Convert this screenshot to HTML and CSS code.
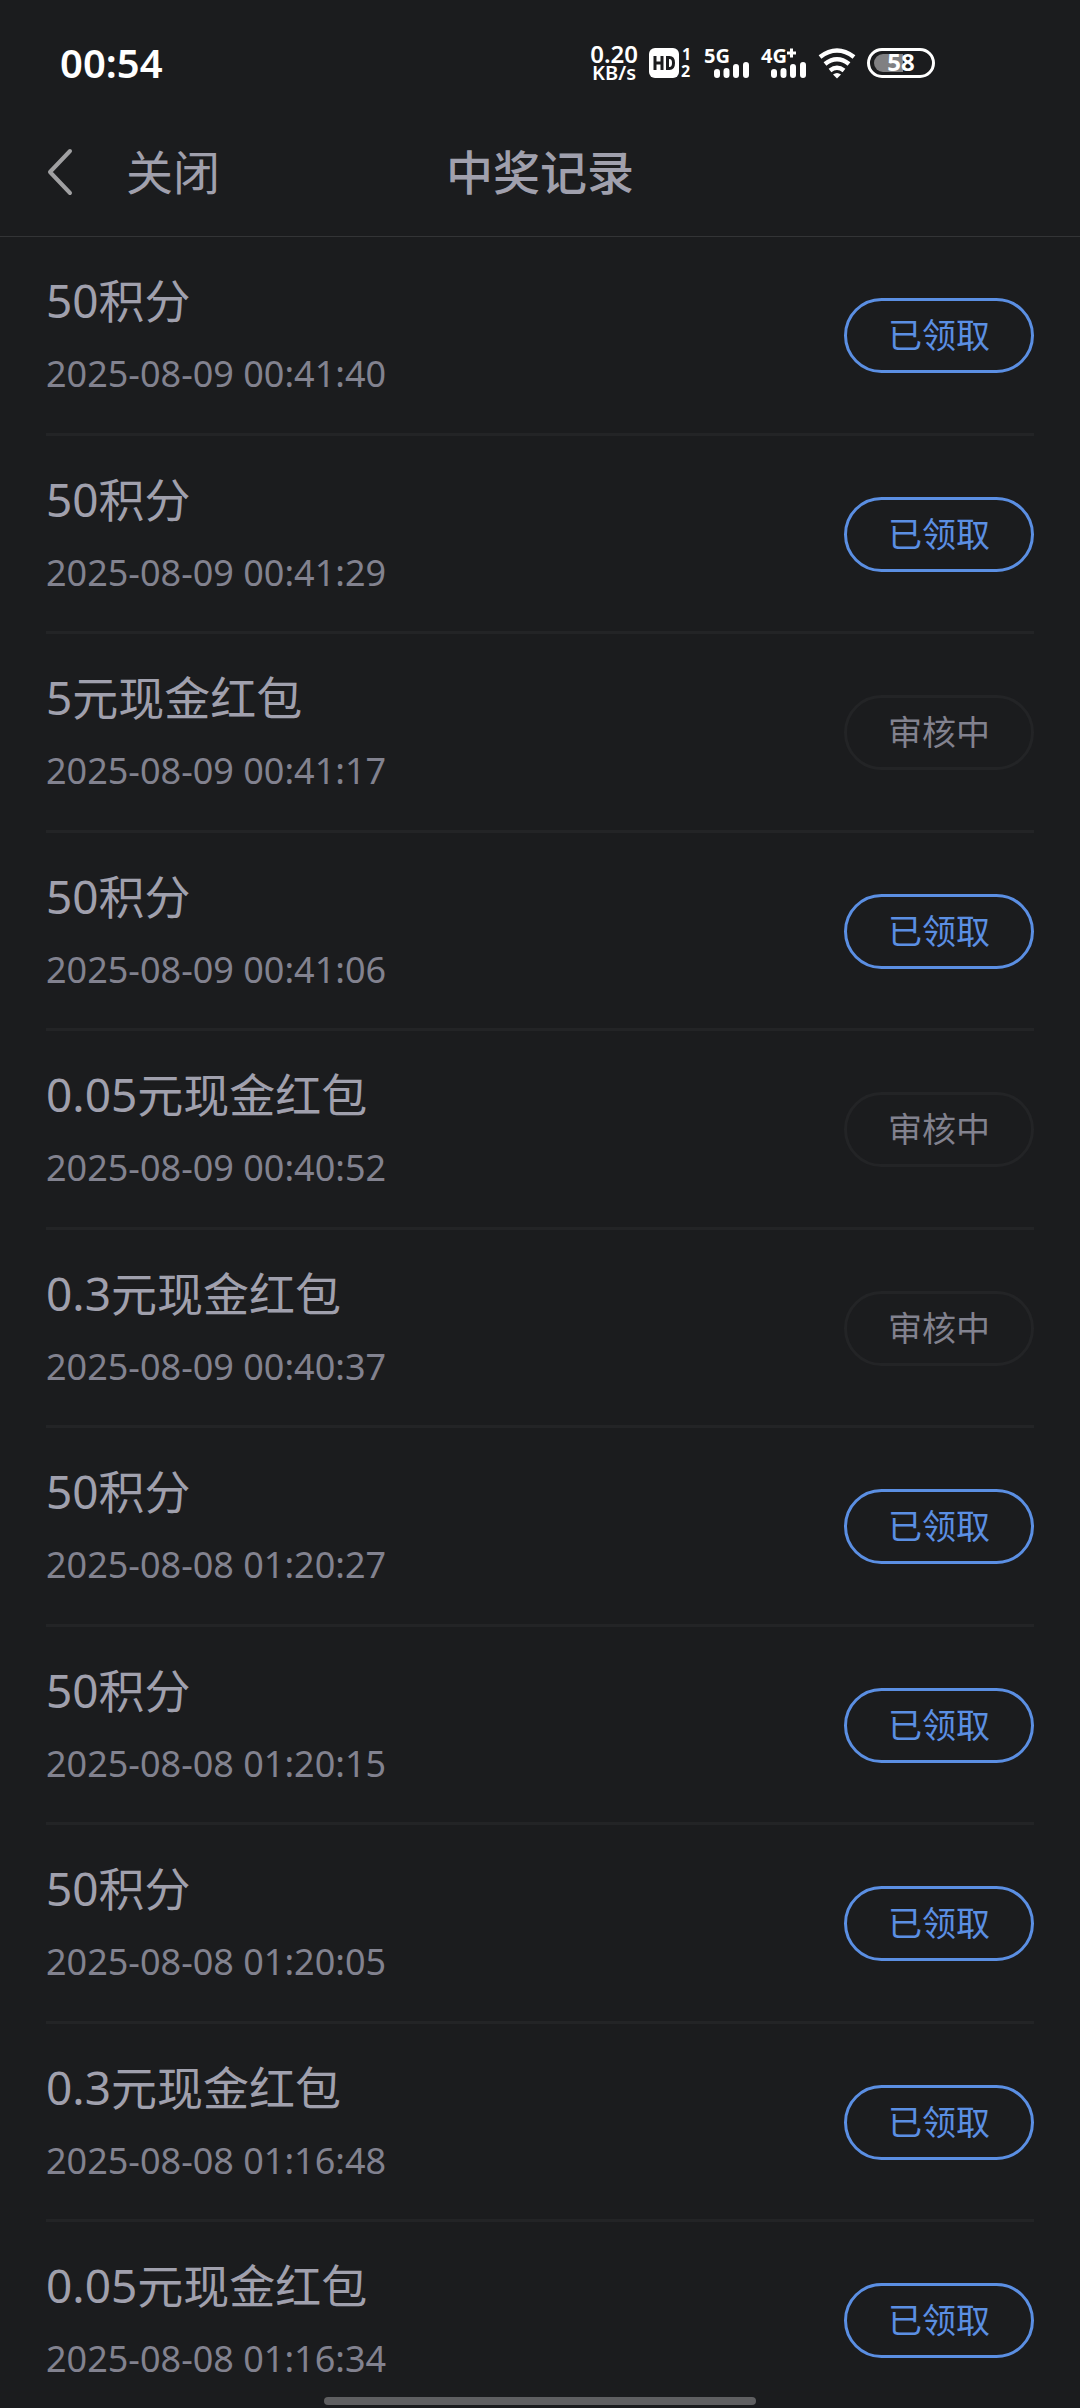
FILE: index.html
```html
<!DOCTYPE html>
<html lang="zh-CN">
<head>
    <meta charset="UTF-8">
    <meta name="viewport" content="width=device-width, initial-scale=1.0">
    <title>中奖记录</title>
    <link rel="stylesheet" href="styles.css">
</head>
<body>
<div class="screen">
    <div class="status-bar">
        <span class="clock">00:54</span>
        <div class="status-icons">
            <div class="speed"><span class="speed-value">0.20</span><span class="speed-unit">KB/s</span></div>
            <svg class="icon-hd" width="44" height="32" viewBox="0 0 44 32">
                <rect x="0" y="1" width="30" height="30" rx="6" fill="#fff"/>
                <path d="M6 9v14M13 9v14M6 16h7M18.500 10.500h2q4 0 4 5.500t-4 5.500h-2z" fill="none" stroke="#1b1c1e" stroke-width="3"/>
                <text x="33" y="13" class="tiny">1</text>
                <text x="32" y="30" class="tiny">2</text>
            </svg>
            <svg class="icon-signal" width="46" height="32" viewBox="0 0 46 32">
                <text x="0" y="16" class="net">5G</text>
                <path d="M13 25v3M22.500 24v4M32 20v8M42 18v10" fill="none" stroke="#fff" stroke-width="6" stroke-linecap="round"/>
            </svg>
            <svg class="icon-signal" width="46" height="32" viewBox="0 0 46 32">
                <text x="0" y="16" class="net">4G</text>
                <path d="M26 6h9M30.500 1.500v9" stroke="#fff" stroke-width="3"/>
                <path d="M13 25v3M22.500 24v4M32 20v8M42 18v10" fill="none" stroke="#fff" stroke-width="6" stroke-linecap="round"/>
            </svg>
            <svg class="icon-wifi" width="38" height="32" viewBox="0 0 38 32">
                <path d="M2 10Q19-3 36 10M7 17Q19 7.500 31 17M12 23.500Q19 18 26 23.500" fill="none" stroke="#fff" stroke-width="4.500"/>
                <path d="M15 27.500Q19 24.500 23 27.500L19 31.500z" fill="#fff"/>
            </svg>
            <svg class="icon-battery" width="68" height="32" viewBox="0 0 68 32">
                <rect x="1.500" y="2.500" width="65" height="27" rx="13.500" fill="none" stroke="#fff" stroke-width="3"/>
                <path d="M16 7h20v18H16a9 9 0 0 1 0-18z" fill="#808082"/>
                <text x="34" y="24" text-anchor="middle" class="level">58</text>
            </svg>
        </div>
    </div>

    <header class="header">
        <div class="header-left">
            <button class="back" type="button" aria-label="返回">
                <svg width="28" height="48" viewBox="0 0 28 48">
                    <path d="M24 3L4 24l20 21" fill="none" stroke="#a0a0a2" stroke-width="4" stroke-linecap="round" stroke-linejoin="round"/>
                </svg>
            </button>
            <button class="close" type="button">关闭</button>
        </div>
        <h1>中奖记录</h1>
    </header>

    <ul class="records">
        <li class="record">
            <div class="info"><p class="prize">50积分</p><time class="date">2025-08-09 00:41:40</time></div>
            <button class="state" type="button">已领取</button>
        </li>
        <li class="record">
            <div class="info"><p class="prize">50积分</p><time class="date">2025-08-09 00:41:29</time></div>
            <button class="state" type="button">已领取</button>
        </li>
        <li class="record">
            <div class="info"><p class="prize">5元现金红包</p><time class="date">2025-08-09 00:41:17</time></div>
            <button class="state pending" type="button">审核中</button>
        </li>
        <li class="record">
            <div class="info"><p class="prize">50积分</p><time class="date">2025-08-09 00:41:06</time></div>
            <button class="state" type="button">已领取</button>
        </li>
        <li class="record">
            <div class="info"><p class="prize">0.05元现金红包</p><time class="date">2025-08-09 00:40:52</time></div>
            <button class="state pending" type="button">审核中</button>
        </li>
        <li class="record">
            <div class="info"><p class="prize">0.3元现金红包</p><time class="date">2025-08-09 00:40:37</time></div>
            <button class="state pending" type="button">审核中</button>
        </li>
        <li class="record">
            <div class="info"><p class="prize">50积分</p><time class="date">2025-08-08 01:20:27</time></div>
            <button class="state" type="button">已领取</button>
        </li>
        <li class="record">
            <div class="info"><p class="prize">50积分</p><time class="date">2025-08-08 01:20:15</time></div>
            <button class="state" type="button">已领取</button>
        </li>
        <li class="record">
            <div class="info"><p class="prize">50积分</p><time class="date">2025-08-08 01:20:05</time></div>
            <button class="state" type="button">已领取</button>
        </li>
        <li class="record">
            <div class="info"><p class="prize">0.3元现金红包</p><time class="date">2025-08-08 01:16:48</time></div>
            <button class="state" type="button">已领取</button>
        </li>
        <li class="record">
            <div class="info"><p class="prize">0.05元现金红包</p><time class="date">2025-08-08 01:16:34</time></div>
            <button class="state" type="button">已领取</button>
        </li>
    </ul>
</div>
<div class="home-bar"></div>
</body>
</html>
```
FILE: styles.css
```css
* {
    box-sizing: border-box;
}

body {
    margin: 0;
    background-color: #1b1c1e;
    color: #a0a0ad;
    font-family: "Noto Sans", "Noto Sans CJK SC", sans-serif;
}

.screen {
    height: 100vh;
    overflow: hidden;
}

/* status bar */
.status-bar {
    display: flex;
    align-items: center;
    justify-content: space-between;
    height: 108px;
    padding: 18px 145px 0 60px;
    color: #ffffff;
}

.clock {
    font-size: 40px;
    font-weight: 600;
    line-height: 48px;
}

.status-icons {
    display: flex;
    align-items: center;
    gap: 11px;
}

.status-icons svg {
    overflow: visible;
}

.status-icons text {
    fill: #ffffff;
    font-weight: 700;
}

.speed {
    display: flex;
    flex-direction: column;
    align-items: center;
    font-weight: 600;
}

.speed-value {
    font-size: 24px;
    line-height: 20px;
}

.speed-unit {
    font-size: 20px;
    line-height: 18px;
}

.tiny {
    font-size: 16px;
}

.net {
    font-size: 20px;
}

.level {
    font-size: 24px;
}

/* header */
.header {
    display: grid;
    grid-template-columns: 1fr auto 1fr;
    align-items: center;
    height: 129px;
    padding: 0 46px;
    border-bottom: 1px solid #333436;
}

.header-left {
    display: flex;
    align-items: center;
    gap: 52px;
}

.header button {
    display: flex;
    padding: 0;
    border: none;
    background: none;
    color: inherit;
    font-family: inherit;
    cursor: pointer;
}

.header .close {
    font-size: 47px;
    line-height: 60px;
}

h1 {
    margin: 0;
    font-size: 47px;
    font-weight: 500;
    line-height: 60px;
}

/* records */
.records {
    margin: 0;
    padding: 0 46px;
    list-style: none;
}

.record {
    display: flex;
    align-items: center;
    justify-content: space-between;
    padding: 34px 0;
    border-bottom: 3px solid #232426;
}

.record:nth-child(even) {
    padding-bottom: 33px;
}

.info {
    display: flex;
    flex-direction: column;
    gap: 20px;
}

.prize {
    margin: 0;
    font-size: 46px;
    line-height: 58px;
}

.date {
    color: #82828f;
    font-size: 36px;
    line-height: 50px;
}

.state {
    width: 190px;
    height: 75px;
    padding: 0 0 4px;
    border: 3px solid #5b8fe3;
    border-radius: 38px;
    background: none;
    color: #5b8fe3;
    font-family: inherit;
    font-size: 34px;
    cursor: pointer;
}

.pending {
    border-color: #232426;
    color: #82828f;
}

.home-bar {
    position: fixed;
    bottom: 3px;
    left: 30%;
    right: 30%;
    height: 8px;
    border-radius: 4px;
    background-color: #5f5f61;
}
```
